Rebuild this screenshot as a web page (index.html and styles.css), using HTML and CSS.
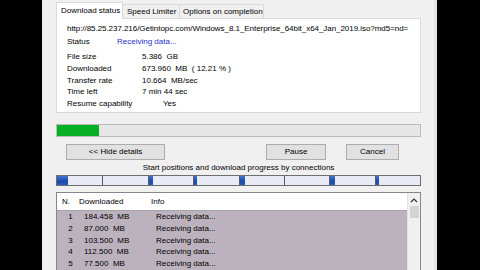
FILE: index.html
```html
<!DOCTYPE html>
<html>
<head>
<meta charset="utf-8">
<link rel="stylesheet" href="styles.css">
</head>
<body>
<div class="window">
  <div class="tabs">
    <div class="tab active">Download status</div>
    <div class="tab t2">Speed Limiter</div>
    <div class="tab t3">Options on completion</div>
  </div>
  <div class="panel">
    <div class="url">http://85.25.237.216/Getintopc.com/Windows_8.1_Enterprise_64bit_x64_Jan_2019.iso?md5=nd=</div>
    <div class="status"><span class="slabel">Status</span><span class="sval">Receiving data...</span></div>
    <div class="info">
      <span class="lbl">File size</span><span class="val">5.386  GB</span>
      <span class="lbl">Downloaded</span><span class="val">673.960  MB  ( 12.21 % )</span>
      <span class="lbl">Transfer rate</span><span class="val">10.664  MB/sec</span>
      <span class="lbl">Time left</span><span class="val">7 min 44 sec</span>
      <span class="lbl">Resume capability</span><span class="val yes">Yes</span>
    </div>
  </div>
  <div class="progress"><div class="fill" style="width:42px"></div></div>
  <div class="buttons">
    <div class="btn hide">&lt;&lt; Hide details</div>
    <div class="spacer"></div>
    <div class="btn pause">Pause</div>
    <div class="btn cancel">Cancel</div>
  </div>
  <div class="caption">Start positions and download progress by connections</div>
  <div class="conns">
    <div class="seg"><div class="prog" style="width:11px"></div></div>
    <div class="seg"><div class="prog" style="width:0px"></div></div>
    <div class="seg"><div class="prog" style="width:4px"></div></div>
    <div class="seg"><div class="prog" style="width:3px"></div></div>
    <div class="seg"><div class="prog" style="width:5px"></div></div>
    <div class="seg"><div class="prog" style="width:0px"></div></div>
    <div class="seg"><div class="prog" style="width:5px"></div></div>
    <div class="seg"><div class="prog" style="width:3px"></div></div>
  </div>
  <div class="table">
    <div class="rows">
      <div class="row head"><span class="c1">N.</span><span class="c2">Downloaded</span><span class="c3">Info</span></div>
      <div class="body">
        <div class="row"><span class="c1">1</span><span class="c2">184.458  MB</span><span class="c3">Receiving data...</span></div>
        <div class="row"><span class="c1">2</span><span class="c2">87.000  MB</span><span class="c3">Receiving data...</span></div>
        <div class="row"><span class="c1">3</span><span class="c2">103.500  MB</span><span class="c3">Receiving data...</span></div>
        <div class="row"><span class="c1">4</span><span class="c2">112.500  MB</span><span class="c3">Receiving data...</span></div>
        <div class="row"><span class="c1">5</span><span class="c2">77.500  MB</span><span class="c3">Receiving data...</span></div>
      </div>
    </div>
    <div class="scroll">
      <svg class="arrow" width="12" height="8" viewBox="0 0 12 8"><path d="M3 6 L6 3 L9 6" fill="none" stroke="#333" stroke-width="1.2"/></svg>
      <div class="thumb"></div>
    </div>
  </div>
</div>
</body>
</html>
```
FILE: styles.css
```css
html, body {
  margin: 0;
  padding: 0;
  background: #000;
  width: 480px;
  height: 270px;
  overflow: hidden;
}
body {
  display: flex;
  font-family: "Liberation Sans", Arial, sans-serif;
  font-size: 8px;
  color: #000;
}
.window {
  margin-left: 42px;
  width: 395px;
  height: 270px;
  box-sizing: border-box;
  background: #f0f0f0;
  padding: 2px 13px 0 14px;
  border-right: 3px solid #e4e4e4;
  display: flex;
  flex-direction: column;
  overflow: hidden;
}
.tabs {
  display: flex;
  height: 16px;
  align-items: flex-end;
  position: relative;
  z-index: 1;
}
.tab {
  box-sizing: border-box;
  height: 14px;
  border: 1px solid #d9d9d9;
  border-bottom: none;
  background: #f0f0f0;
  padding: 2px 0 0 4px;
  line-height: 10px;
  margin-left: -1px;
  white-space: nowrap;
  overflow: hidden;
}
.tab.active {
  height: 17px;
  margin-bottom: -1px;
  background: #fff;
  width: 67px;
  margin-left: 0;
  padding-top: 3px;
  padding-left: 4px;
}
.t2 { width: 58px; padding-left: 4px; }
.t3 { width: 85px; padding-left: 3px; }
.panel {
  background: #fff;
  border: 1px solid #d9d9d9;
  height: 97px;
  box-sizing: border-box;
  padding: 4px 4px 0 10px;
  overflow: hidden;
}
.url {
  line-height: 12px;
  white-space: nowrap;
  overflow: hidden;
  text-overflow: clip;
  letter-spacing: -0.05px;
}
.status {
  line-height: 12px;
  margin-top: 1px;
  display: flex;
}
.slabel { width: 50px; }
.sval { color: #2a2ec8; }
.info {
  margin-top: 3px;
  display: grid;
  grid-template-columns: 75px 1fr;
  line-height: 11.75px;
}
.val { white-space: pre; }
.val.yes { padding-left: 21px; }
.progress {
  margin-top: 11px;
  height: 13px;
  box-sizing: border-box;
  border: 1px solid #bcbcbc;
  background: #e6e6e6;
}
.fill {
  height: 100%;
  background: #06b025;
}
.buttons {
  margin-top: 7px;
  display: flex;
  padding: 0 22px 0 10px;
}
.spacer { flex: 1; }
.btn {
  box-sizing: border-box;
  height: 16px;
  border: 1px solid #adadad;
  background: #e1e1e1;
  text-align: center;
  line-height: 14px;
}
.hide { width: 99px; }
.pause { width: 60px; }
.cancel { width: 53px; margin-left: 20px; }
.caption {
  margin-top: 2px;
  text-align: center;
  line-height: 11px;
}
.conns {
  margin-top: 2px;
  height: 11px;
  box-sizing: border-box;
  border: 1px solid #6e6e6e;
  background: #e8ebf5;
  display: grid;
  grid-template-columns: repeat(8, 1fr);
}
.seg {
  border-left: 1px solid #5a5a6a;
  display: flex;
}
.seg:first-child { border-left: none; }
.prog {
  height: 100%;
  background: linear-gradient(#3f74d2, #1d4aa6 60%, #2c5cc0);
}
.table {
  margin-top: 6px;
  flex: 1;
  border: 1px solid #828790;
  border-bottom: none;
  display: flex;
  background: #fff;
}
.rows {
  flex: 1;
  display: flex;
  flex-direction: column;
}
.row {
  display: flex;
  height: 11.8px;
  line-height: 11.8px;
  white-space: pre;
}
.row.head {
  height: 17px;
  line-height: 17px;
  background: #fff;
  border-bottom: 1px solid #a9a0ad;
}
.body {
  flex: 1;
  background: #bbb2be;
}
.c1 { width: 27px; text-align: center; }
.c2 { width: 72px; }
.c3 { flex: 1; }
.head .c1 { width: 22px; text-align: left; padding-left: 5px; box-sizing: border-box; }
.scroll {
  width: 12px;
  background: #f0f0f0;
  border-left: 1px solid #e2e2e2;
  display: flex;
  flex-direction: column;
  align-items: center;
}
.arrow { margin-top: 3px; }
.thumb {
  margin-top: 2px;
  width: 9px;
  height: 12px;
  background: #d3d3d3;
}
```
